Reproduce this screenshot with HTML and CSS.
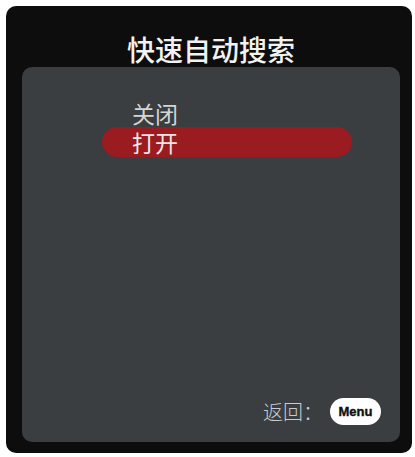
FILE: index.html
```html
<!DOCTYPE html>
<html lang="zh">
<head>
<meta charset="utf-8">
<link rel="stylesheet" href="styles.css">
</head>
<body>
<div class="frame">
  <div class="title">快速自动搜索</div>
  <div class="panel">
    <ul class="options">
      <li class="option">关闭</li>
      <li class="option selected">打开</li>
    </ul>
    <div class="footer">
      <span class="back">返回：</span>
      <span class="menu-btn">Menu</span>
    </div>
  </div>
</div>
</body>
</html>
```
FILE: styles.css
```css
html, body {
  margin: 0;
  padding: 0;
  background: #ffffff;
}
body {
  font-family: "Noto Sans CJK SC", "Noto Sans", sans-serif;
}
.frame {
  box-sizing: border-box;
  margin: 6px 0 0 6px;
  width: 406px;
  height: 447px;
  background: #0d0d0d;
  border-radius: 10px;
  padding: 0 12px 11px 16px;
  display: flex;
  flex-direction: column;
}
.title {
  margin-top: 29px;
  margin-bottom: 4px;
  height: 28px;
  line-height: 28px;
  font-size: 28px;
  font-weight: 500;
  color: #f2f2f2;
  text-align: center;
}
.panel {
  flex: 1;
  background: #3a3e41;
  border-radius: 10px;
  padding: 32px 19px 17px 80px;
  display: flex;
  flex-direction: column;
}
.options {
  list-style: none;
  margin: 0;
  padding: 0;
  flex: 1;
}
.option {
  width: 250px;
  box-sizing: border-box;
  padding-left: 30px;
  height: 28px;
  line-height: 28px;
  font-size: 23px;
  color: #d4d6d6;
}
.option.selected {
  height: 30px;
  line-height: 30px;
  background: #9a1b20;
  border-radius: 15px;
  color: #f0e6e6;
}
.footer {
  display: flex;
  justify-content: flex-end;
  align-items: center;
}
.back {
  font-size: 20px;
  font-weight: 300;
  color: #c8cbcb;
  line-height: 27px;
  margin-right: 7px;
}
.menu-btn {
  width: 51px;
  height: 27px;
  border-radius: 14px;
  background: #ffffff;
  color: #111111;
  font-family: "Liberation Sans", Arial, sans-serif;
  font-weight: bold;
  font-size: 13px;
  -webkit-text-stroke: 0.4px #111111;
  display: flex;
  align-items: center;
  justify-content: center;
}
```
